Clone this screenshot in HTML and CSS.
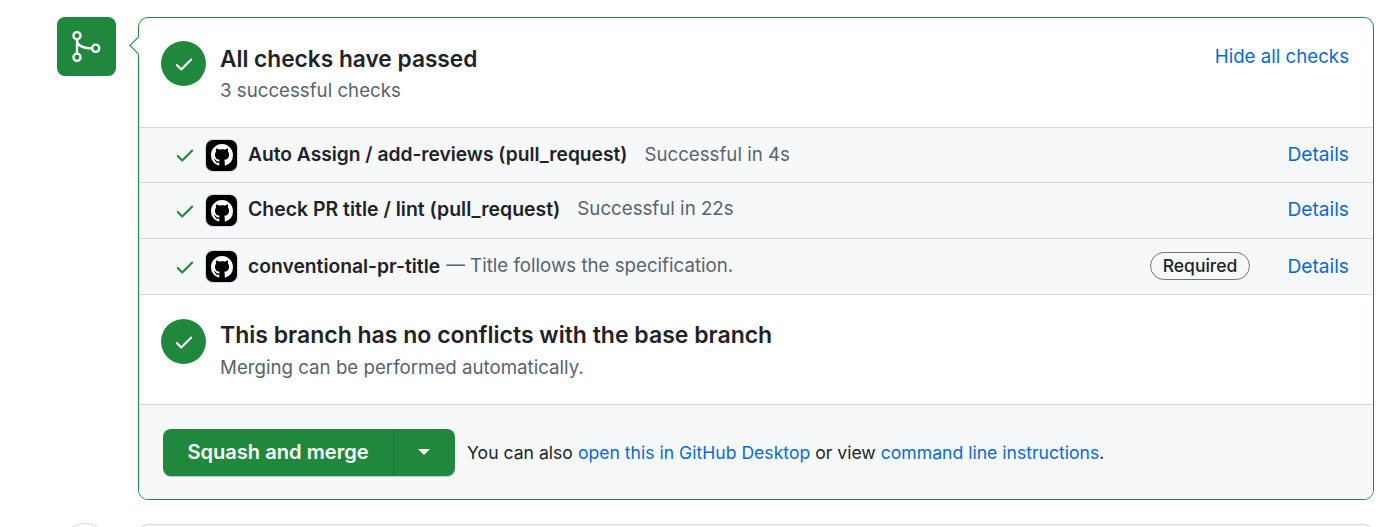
FILE: index.html
```html
<!DOCTYPE html>
<html lang="en">
<head>
	<meta charset="UTF-8">
	<title>Merge box</title>
	<link rel="stylesheet" href="styles.css">
</head>
<body>
	<div class="timeline">
		<div class="merge-row">
			<div class="merge-icon">
				<svg width="59" height="59" viewBox="0 0 59 59" fill="none" stroke="#fff" stroke-width="2.3">
					<circle cx="20" cy="18.7" r="3.6"/>
					<circle cx="20" cy="40.3" r="3.6"/>
					<circle cx="38.7" cy="31.3" r="3.6"/>
					<path d="M20 22.3V36.7M20 23.5C20.5 28 25 31.3 35.1 31.3"/>
				</svg>
			</div>
			<div class="box">
				<div class="section head">
					<div class="status">
						<svg width="22" height="22" viewBox="0 0 16 16" fill="#fff"><path d="M13.78 4.22a.75.75 0 0 1 0 1.06l-7.25 7.25a.75.75 0 0 1-1.06 0L2.22 9.28a.751.751 0 0 1 .018-1.042.751.751 0 0 1 1.042-.018L6 10.94l6.72-6.72a.75.75 0 0 1 1.06 0Z"/></svg>
					</div>
					<div class="section-text">
						<h3 class="head-title">All checks have passed</h3>
						<p class="head-sub">3 successful checks</p>
					</div>
					<a class="link hide-link" href="#">Hide all checks</a>
				</div>

				<div class="check first">
					<svg class="tick" width="22" height="22" viewBox="0 0 16 16"><path d="M13.78 4.22a.75.75 0 0 1 0 1.06l-7.25 7.25a.75.75 0 0 1-1.06 0L2.22 9.28a.751.751 0 0 1 .018-1.042.751.751 0 0 1 1.042-.018L6 10.94l6.72-6.72a.75.75 0 0 1 1.06 0Z"/></svg>
					<span class="app-logo">
						<svg width="22" height="22" viewBox="0 0 16 16" fill="#fff"><path d="M8 0c4.42 0 8 3.58 8 8a8.013 8.013 0 0 1-5.45 7.59c-.4.08-.55-.17-.55-.38 0-.27.01-1.13.01-2.2 0-.75-.25-1.23-.54-1.48 1.78-.2 3.65-.88 3.65-3.95 0-.88-.31-1.59-.82-2.15.08-.2.36-1.02-.08-2.12 0 0-.67-.22-2.2.82-.64-.18-1.32-.27-2-.27-.68 0-1.36.09-2 .27-1.53-1.03-2.2-.82-2.2-.82-.44 1.1-.16 1.92-.08 2.12-.51.56-.82 1.28-.82 2.15 0 3.06 1.86 3.75 3.64 3.95-.23.2-.44.55-.51 1.07-.46.21-1.61.55-2.33-.66-.15-.24-.6-.83-1.23-.82-.67.01-.27.38.01.53.34.19.73.9.82 1.13.16.45.68 1.31 2.69.94 0 .67.01 1.3.01 1.49 0 .21-.15.45-.55.38A7.995 7.995 0 0 1 0 8c0-4.42 3.58-8 8-8Z"/></svg>
					</span>
					<span class="check-name">Auto Assign / add-reviews (pull_request)</span>
					<span class="check-note">Successful in 4s</span>
					<a class="link details" href="#">Details</a>
				</div>

				<div class="check second">
					<svg class="tick" width="22" height="22" viewBox="0 0 16 16"><path d="M13.78 4.22a.75.75 0 0 1 0 1.06l-7.25 7.25a.75.75 0 0 1-1.06 0L2.22 9.28a.751.751 0 0 1 .018-1.042.751.751 0 0 1 1.042-.018L6 10.94l6.72-6.72a.75.75 0 0 1 1.06 0Z"/></svg>
					<span class="app-logo">
						<svg width="22" height="22" viewBox="0 0 16 16" fill="#fff"><path d="M8 0c4.42 0 8 3.58 8 8a8.013 8.013 0 0 1-5.45 7.59c-.4.08-.55-.17-.55-.38 0-.27.01-1.13.01-2.2 0-.75-.25-1.23-.54-1.48 1.78-.2 3.65-.88 3.65-3.95 0-.88-.31-1.59-.82-2.15.08-.2.36-1.02-.08-2.12 0 0-.67-.22-2.2.82-.64-.18-1.32-.27-2-.27-.68 0-1.36.09-2 .27-1.53-1.03-2.2-.82-2.2-.82-.44 1.1-.16 1.92-.08 2.12-.51.56-.82 1.28-.82 2.15 0 3.06 1.86 3.75 3.64 3.95-.23.2-.44.55-.51 1.07-.46.21-1.61.55-2.33-.66-.15-.24-.6-.83-1.23-.82-.67.01-.27.38.01.53.34.19.73.9.82 1.13.16.45.68 1.31 2.69.94 0 .67.01 1.3.01 1.49 0 .21-.15.45-.55.38A7.995 7.995 0 0 1 0 8c0-4.42 3.58-8 8-8Z"/></svg>
					</span>
					<span class="check-name">Check PR title / lint (pull_request)</span>
					<span class="check-note">Successful in 22s</span>
					<a class="link details" href="#">Details</a>
				</div>

				<div class="check">
					<svg class="tick" width="22" height="22" viewBox="0 0 16 16"><path d="M13.78 4.22a.75.75 0 0 1 0 1.06l-7.25 7.25a.75.75 0 0 1-1.06 0L2.22 9.28a.751.751 0 0 1 .018-1.042.751.751 0 0 1 1.042-.018L6 10.94l6.72-6.72a.75.75 0 0 1 1.06 0Z"/></svg>
					<span class="app-logo">
						<svg width="22" height="22" viewBox="0 0 16 16" fill="#fff"><path d="M8 0c4.42 0 8 3.58 8 8a8.013 8.013 0 0 1-5.45 7.59c-.4.08-.55-.17-.55-.38 0-.27.01-1.13.01-2.2 0-.75-.25-1.23-.54-1.48 1.78-.2 3.65-.88 3.65-3.95 0-.88-.31-1.59-.82-2.15.08-.2.36-1.02-.08-2.12 0 0-.67-.22-2.2.82-.64-.18-1.32-.27-2-.27-.68 0-1.36.09-2 .27-1.53-1.03-2.2-.82-2.2-.82-.44 1.1-.16 1.92-.08 2.12-.51.56-.82 1.28-.82 2.15 0 3.06 1.86 3.75 3.64 3.95-.23.2-.44.55-.51 1.07-.46.21-1.61.55-2.33-.66-.15-.24-.6-.83-1.23-.82-.67.01-.27.38.01.53.34.19.73.9.82 1.13.16.45.68 1.31 2.69.94 0 .67.01 1.3.01 1.49 0 .21-.15.45-.55.38A7.995 7.995 0 0 1 0 8c0-4.42 3.58-8 8-8Z"/></svg>
					</span>
					<span class="check-name tight">conventional-pr-title</span>
					<span class="check-note">— Title follows the specification.</span>
					<span class="required">Required</span>
					<a class="link details near" href="#">Details</a>
				</div>

				<div class="section conflicts">
					<div class="status">
						<svg width="22" height="22" viewBox="0 0 16 16" fill="#fff"><path d="M13.78 4.22a.75.75 0 0 1 0 1.06l-7.25 7.25a.75.75 0 0 1-1.06 0L2.22 9.28a.751.751 0 0 1 .018-1.042.751.751 0 0 1 1.042-.018L6 10.94l6.72-6.72a.75.75 0 0 1 1.06 0Z"/></svg>
					</div>
					<div class="section-text">
						<h3>This branch has no conflicts with the base branch</h3>
						<p>Merging can be performed automatically.</p>
					</div>
				</div>

				<div class="actions">
					<div class="btn-group">
						<button class="btn-main">Squash and merge</button>
						<button class="btn-caret"><span class="caret"></span></button>
					</div>
					<p class="hint">You can also <a class="link" href="#">open this in GitHub Desktop</a> or view <a class="link" href="#">command line instructions</a>.</p>
				</div>
			</div>
		</div>

		<div class="next-row">
			<div class="avatar"></div>
			<div class="next-box"></div>
		</div>
	</div>
</body>
</html>
```

FILE: styles.css
```css
html,body{margin: 0;padding: 0;height: 527px;overflow: hidden;background-color: #fff;}
body{font-family: "Inter","Liberation Sans",sans-serif;color: #1f2328;font-size: 18.7px;}

.timeline{padding: 17px 26px 0 57px;}
.merge-row{display: flex;align-items: flex-start;gap: 22px;}

.merge-icon{width: 59px;height: 59px;flex: none;display: flex;justify-content: center;align-items: center;background-color: #1f883d;border-radius: 8px;}

.box{position: relative;flex: 1;height: 483px;box-sizing: border-box;border: 1.5px solid #1f883d;border-radius: 10px;background-color: #fff;display: flex;flex-direction: column;}
.box::before{content: "";position: absolute;left: -7px;top: 21px;width: 12px;height: 12px;background-color: #fff;border-left: 1.5px solid #1f883d;border-bottom: 1.5px solid #1f883d;transform: rotate(45deg);}

.section{display: flex;align-items: flex-start;padding: 0 24px 0 22px;gap: 14px;box-sizing: border-box;}
.head{height: 109px;padding-top: 23px;}
.conflicts{height: 110px;padding-top: 24px;border-top: 1.5px solid #d1d9e0;}

.status{width: 45px;height: 45px;flex: none;display: flex;justify-content: center;align-items: center;background-color: #1f883d;border-radius: 50%;}

.section-text h3{margin: 0;font-size: 23px;line-height: 32px;font-weight: 600;}
.section-text .head-title{font-size: 22.7px;margin-top: 2px;}
.section-text p{margin: 3px 0 0;font-size: 18.7px;line-height: 27px;color: #59636e;}
.section-text .head-sub{margin-top: 2px;}

.link{color: #0969da;text-decoration: none;}
.hide-link{margin-left: auto;line-height: 32px;}

.check{display: flex;align-items: center;height: 56px;box-sizing: border-box;padding: 0 24px 0 35px;background-color: #f6f8fa;border-top: 1.5px solid #d1d9e0;}
.check.first{height: 55px;}
.tick{fill: #1f883d;flex: none;}
.app-logo{width: 31px;height: 31px;flex: none;margin: 0 11px 0 10px;display: flex;justify-content: center;align-items: center;background-color: #000;border-radius: 7px;box-shadow: 0 0 0 1px #d1d9e0;}
.check-name{font-size: 19.2px;font-weight: 600;margin: 0 17px 2px 0;}
.check.second .check-name{font-size: 19.45px;margin-bottom: 4px;}
.check.second .check-note{margin-bottom: 4px;}
.check.second .details{margin-bottom: 4px;}
.check-name.tight{font-size: 19.3px;margin-right: 6px;}
.check-note{color: #59636e;margin-bottom: 2px;}
.details{font-size: 19.2px;margin: 0 0 2px auto;}
.details.near{margin-left: 37px;}
.required{margin: 0 0 2px auto;height: 28px;line-height: 25px;box-sizing: border-box;padding: 0 12px;font-size: 17.5px;font-weight: 500;border: 1.5px solid #6e7781;border-radius: 14px;}

.actions{flex: 1;display: flex;align-items: center;gap: 12px;padding: 0 24px;background-color: #f6f8fa;border-top: 1.5px solid #d1d9e0;border-radius: 0 0 9px 9px;}
.btn-group{display: flex;height: 47px;flex: none;border-radius: 8px;background-color: #1f883d;box-shadow: 0 1px 1px rgba(31,35,40,.25);}
.btn-group button{border: none;background: none;color: #fff;font-family: inherit;padding: 0;}
.btn-group .btn-main{width: 231px;font-size: 20.1px;font-weight: 600;border-right: 1px solid #1b7735;}
.btn-group .btn-caret{width: 61px;padding-right: 2px;display: flex;justify-content: center;align-items: center;}
.caret{width: 0;height: 0;border-left: 6px solid transparent;border-right: 6px solid transparent;border-top: 6px solid #fff;}
.hint{margin: 0;font-size: 17.6px;}

.next-row{display: flex;gap: 30px;margin-top: 23px;height: 4px;overflow: hidden;}
.avatar{width: 46px;height: 46px;flex: none;margin-left: 5px;box-sizing: border-box;border: 1.5px solid #d1d9e0;border-radius: 50%;}
.next-box{flex: 1;height: 40px;margin-top: 1px;border: 1.5px solid #d1d9e0;border-radius: 10px;background-color: #f6f8fa;}
```
